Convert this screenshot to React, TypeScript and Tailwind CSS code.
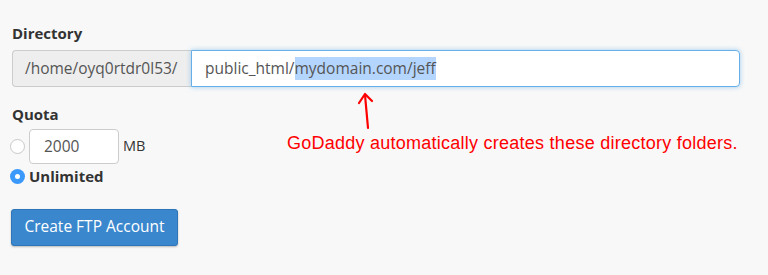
export default function App() {
  return (
    <div className="relative w-[768px] h-[275px] bg-[#f8f8f8] font-['Open_Sans',sans-serif] text-[#333] overflow-hidden">
      <div className="pl-[12px] pr-[28px] pt-[23px]">
        <label className="block text-[15px] leading-[20px] font-bold">Directory</label>
        <div className="mt-[7px] flex h-[37px]">
          <span className="flex items-center w-[179px] pl-[12px] bg-[#eeeeee] border border-[#cccccc] border-r-0 rounded-l-[4px] text-[15.5px] text-[#555]">
            /home/oyq0rtdr0l53/
          </span>
          <div className="flex-1 flex items-center pl-[13px] bg-white border border-[#66afe9] rounded-r-[4px] shadow-[0_0_5px_rgba(102,175,233,0.6)] text-[15.5px] text-[#555]">
            public_html/<span className="bg-[#b4d5fe]">mydomain.com/jeff</span>
          </div>
        </div>

        <label className="block mt-[17px] text-[15px] leading-[20px] font-bold">Quota</label>
        <div className="mt-[5px] flex items-center">
          <span className="w-[15px] h-[15px] -ml-[2px] rounded-full border border-[#c8c8c8] bg-white" />
          <div className="ml-[4px] w-[90px] h-[35px] flex items-center pl-[14px] bg-white border border-[#cccccc] rounded-[4px] text-[15.5px] text-[#555]">
            2000
          </div>
          <span className="ml-[4px] -mt-[2px] text-[14.5px]">MB</span>
        </div>
        <div className="mt-[1px] flex items-center">
          <span className="w-[15px] h-[15px] -ml-[2px] rounded-full bg-[#3b99fc] flex items-center justify-center">
            <span className="w-[5px] h-[5px] rounded-full bg-white" />
          </span>
          <span className="ml-[4px] text-[15px] font-bold">Unlimited</span>
        </div>

        <button className="mt-[21px] -ml-[1px] w-[167px] h-[37px] bg-[#3a87cd] border border-[#2f76b8] rounded-[3px] shadow-[0_1px_2px_rgba(0,0,0,0.25)] text-white text-[15.5px]">
          Create FTP Account
        </button>
      </div>

      {/* annotation */}
      <svg className="absolute left-[355px] top-[90px]" width="22" height="42" viewBox="0 0 22 42">
        <path d="M13 38 L10 5" stroke="#ff0000" strokeWidth="2.2" fill="none" strokeLinecap="round" />
        <path d="M4 13 L10 4 L17 11" stroke="#ff0000" strokeWidth="2.2" fill="none" strokeLinecap="round" strokeLinejoin="round" />
      </svg>
      <div className="absolute left-[287px] top-[133px] text-[18px] leading-[20px] tracking-[0.25px] text-[#ff0000] font-['Liberation_Sans',Arial,sans-serif]">
        GoDaddy automatically creates these directory folders.
      </div>
    </div>
  );
}
